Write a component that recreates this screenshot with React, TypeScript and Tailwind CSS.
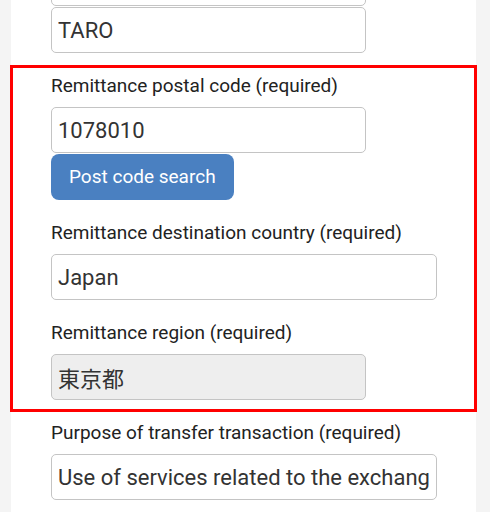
import React from "react";

const font = { fontFamily: 'Roboto, "Noto Sans CJK JP", sans-serif' };

function Field({
  value,
  wide,
  disabled,
  className = "",
}: {
  value: string;
  wide?: boolean;
  disabled?: boolean;
  className?: string;
}) {
  return (
    <input
      readOnly
      value={value}
      className={`block h-[46px] ${
        wide ? "w-[386px]" : "w-[315px]"
      } rounded-[5px] border border-[#c4c4c4] px-[6px] text-[22px] text-[#333] outline-none ${
        disabled ? "bg-[#eeeeee]" : "bg-white"
      } ${className}`}
      style={font}
    />
  );
}

function Label({ children }: { children: React.ReactNode }) {
  return (
    <div className="mb-[9px] h-[24px] text-[19px] leading-[24px] text-[#222]">
      {children}
    </div>
  );
}

export default function App() {
  return (
    <div className="h-[512px] w-[490px] overflow-hidden bg-[#f4f4f4]" style={font}>
      <div className="ml-[11px] flex h-full w-[465px] flex-col bg-white">
        <div className="flex flex-col pl-[40px]">
          <Field value="" className="-mt-[40px]" />
          <Field value="TARO" className="mt-[1px]" />
        </div>

        <div className="-mx-[1px] mt-[12px] border-[3px] border-[#ff0000] pb-[9px] pl-[38px] pt-[6px]">
          <Label>Remittance postal code (required)</Label>
          <Field value="1078010" />
          <button
            className="mt-[1px] h-[46px] rounded-[8px] bg-[#4a80c1] px-[18px] text-[19px] text-white"
            style={font}
          >
            Post code search
          </button>

          <div className="mt-[21px]">
            <Label>Remittance destination country (required)</Label>
            <Field value="Japan" wide />
          </div>

          <div className="mt-[21px]">
            <Label>Remittance region (required)</Label>
            <Field value="東京都" disabled />
          </div>
        </div>

        <div className="pl-[40px] pt-[9px]">
          <Label>Purpose of transfer transaction (required)</Label>
          <Field value="Use of services related to the exchange of virtual currency" wide />
        </div>
      </div>
    </div>
  );
}
